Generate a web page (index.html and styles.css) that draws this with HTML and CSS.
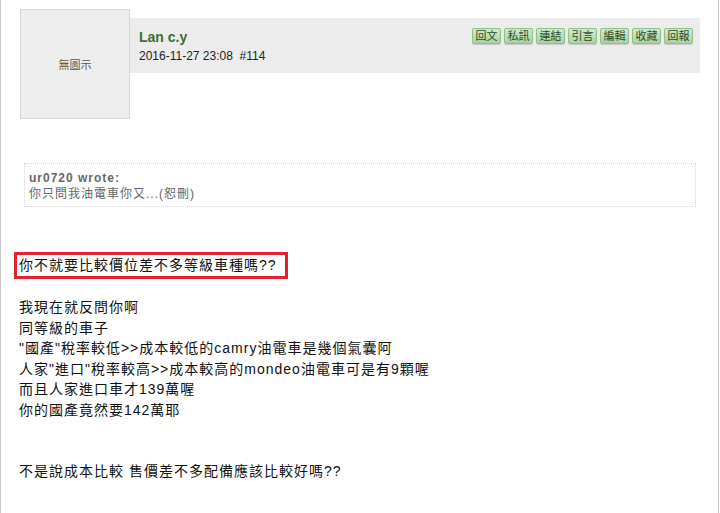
FILE: index.html
```html
<!DOCTYPE html>
<html lang="zh-Hant">
<head>
    <meta charset="UTF-8">
    <meta name="viewport" content="width=device-width, initial-scale=1.0">
    <title>Lan c.y #114</title>
    <link rel="stylesheet" href="styles.css">
</head>
<body>
    <div class="page">
        <div class="post-head">
            <div class="avatar">無圖示</div>
            <div class="post-bar">
                <div class="author">
                    <div class="author-name">Lan c.y</div>
                    <div class="post-date">2016-11-27 23:08&nbsp; #114</div>
                </div>
                <div class="post-actions">
                    <span class="btn">回文</span>
                    <span class="btn">私訊</span>
                    <span class="btn">連結</span>
                    <span class="btn">引言</span>
                    <span class="btn">編輯</span>
                    <span class="btn">收藏</span>
                    <span class="btn">回報</span>
                </div>
            </div>
        </div>

        <div class="quote">
            <div class="quote-author">ur0720 wrote:</div>
            <div class="quote-text">你只問我油電車你又...(恕刪)</div>
        </div>

        <div class="post-body">
            <div class="highlight">你不就要比較價位差不多等級車種嗎??</div>
            <p>
                我現在就反問你啊<br>
                同等級的車子<br>
                "國產"稅率較低&gt;&gt;成本較低的camry油電車是幾個氣囊阿<br>
                人家"進口"稅率較高&gt;&gt;成本較高的mondeo油電車可是有9顆喔<br>
                而且人家進口車才139萬喔<br>
                你的國產竟然要142萬耶<br>
                <br>
                <br>
                不是說成本比較 售價差不多配備應該比較好嗎??
            </p>
        </div>
    </div>
</body>
</html>
```

FILE: styles.css
```css
body {
    margin: 0;
    background-color: #fff;
    font-family: 'Liberation Sans', Arial, 'Noto Sans CJK TC', sans-serif;
    color: #111;
}

.page {
    width: 717px;
    height: 513px;
    border-left: 1px solid #c9c9c9;
    border-right: 1px solid #c9c9c9;
    overflow: hidden;
}

.post-head {
    display: flex;
    align-items: flex-start;
    padding: 9px 18px 0 19px;
}

.avatar {
    box-sizing: border-box;
    width: 110px;
    height: 110px;
    background-color: #eeeeee;
    border: 1px solid #d6d6d6;
    display: flex;
    align-items: center;
    justify-content: center;
    font-size: 11px;
    color: #555;
}

.post-bar {
    flex: 1;
    height: 55px;
    margin-top: 9px;
    background-color: #ececec;
    display: flex;
    justify-content: space-between;
    padding: 10px 7px 0 9px;
    box-sizing: border-box;
}

.author-name {
    font-size: 14px;
    font-weight: bold;
    line-height: 18px;
    color: #3f6f2a;
}

.post-date {
    font-size: 12px;
    line-height: 18px;
    margin-top: 1px;
    color: #222;
}

.post-actions {
    display: flex;
    gap: 3px;
}

.btn {
    width: 29px;
    height: 16px;
    box-sizing: border-box;
    text-align: center;
    font-size: 11px;
    line-height: 14px;
    color: #2e4a2a;
    background: linear-gradient(#d0eacb, #a9d1a1);
    border: 1px solid #93bf8b;
    border-radius: 2px;
    box-shadow: 0 1px 1px rgba(0, 0, 0, 0.15);
}

.quote {
    margin: 44px 22px 0 23px;
    height: 44px;
    box-sizing: border-box;
    border: 1px dotted #d4d4d4;
    padding: 6px 4px 0 4px;
    font-size: 12px;
    line-height: 16px;
    letter-spacing: 1px;
    color: #666;
}

.quote-author {
    font-weight: bold;
}

.post-body {
    padding: 45px 0 0 18px;
    font-size: 14px;
    letter-spacing: 1px;
}

.highlight {
    width: max-content;
    margin-left: -5px;
    border: 3px solid #e3212b;
    padding: 0 8px 0 2px;
    line-height: 21px;
}

.post-body p {
    margin: 18px 0 0;
    line-height: 20.5px;
}
```
